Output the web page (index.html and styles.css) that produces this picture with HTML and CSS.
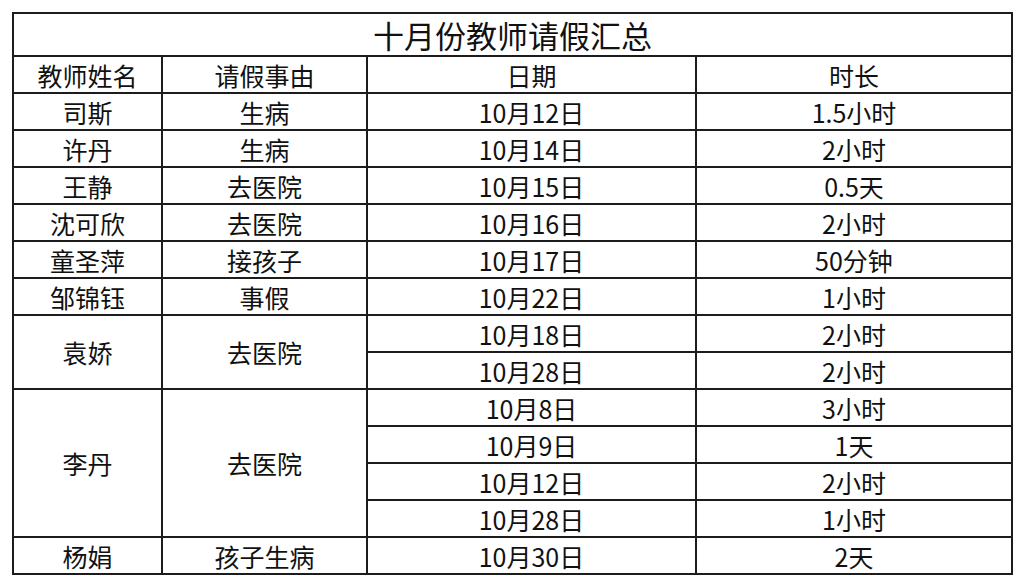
FILE: index.html
```html
<!DOCTYPE html>
<html lang="zh-CN">
<head>
<meta charset="utf-8">
<link rel="stylesheet" href="styles.css">
</head>
<body>
<table class="sheet">
  <colgroup>
    <col class="c1"><col class="c2"><col class="c3"><col class="c4">
  </colgroup>
  <tr class="title-row"><td colspan="4" class="title">十月份教师请假汇总</td></tr>
  <tr><td>教师姓名</td><td>请假事由</td><td>日期</td><td>时长</td></tr>
  <tr><td>司斯</td><td>生病</td><td>10月12日</td><td>1.5小时</td></tr>
  <tr><td>许丹</td><td>生病</td><td>10月14日</td><td>2小时</td></tr>
  <tr><td>王静</td><td>去医院</td><td>10月15日</td><td>0.5天</td></tr>
  <tr><td>沈可欣</td><td>去医院</td><td>10月16日</td><td>2小时</td></tr>
  <tr><td>童圣萍</td><td>接孩子</td><td>10月17日</td><td>50分钟</td></tr>
  <tr><td>邹锦钰</td><td>事假</td><td>10月22日</td><td>1小时</td></tr>
  <tr><td rowspan="2">袁娇</td><td rowspan="2">去医院</td><td>10月18日</td><td>2小时</td></tr>
  <tr><td>10月28日</td><td>2小时</td></tr>
  <tr><td rowspan="4">李丹</td><td rowspan="4">去医院</td><td>10月8日</td><td>3小时</td></tr>
  <tr><td>10月9日</td><td>1天</td></tr>
  <tr><td>10月12日</td><td>2小时</td></tr>
  <tr><td>10月28日</td><td>1小时</td></tr>
  <tr><td>杨娟</td><td>孩子生病</td><td>10月30日</td><td>2天</td></tr>
</table>
</body>
</html>
```
FILE: styles.css
```css
html, body {
  margin: 0;
  padding: 0;
  background: #ffffff;
}
body {
  padding: 12px 0 0 12px;
  font-family: "Noto Sans CJK SC", "Noto Sans", sans-serif;
  color: #111;
}
.sheet {
  border-collapse: collapse;
  table-layout: fixed;
  width: 1001px;
  border: 2px solid #1c1c1c;
}
.c1 { width: 149px; }
.c2 { width: 205px; }
.c3 { width: 329px; }
.c4 { width: 316px; }
.sheet td {
  border: 2px solid #1c1c1c;
  height: 35px;
  padding: 0;
  text-align: center;
  vertical-align: middle;
  font-size: 25px;
  line-height: 30px;
  white-space: nowrap;
}
.sheet .title {
  height: 41px;
  font-size: 31px;
  line-height: 36px;
}
```
